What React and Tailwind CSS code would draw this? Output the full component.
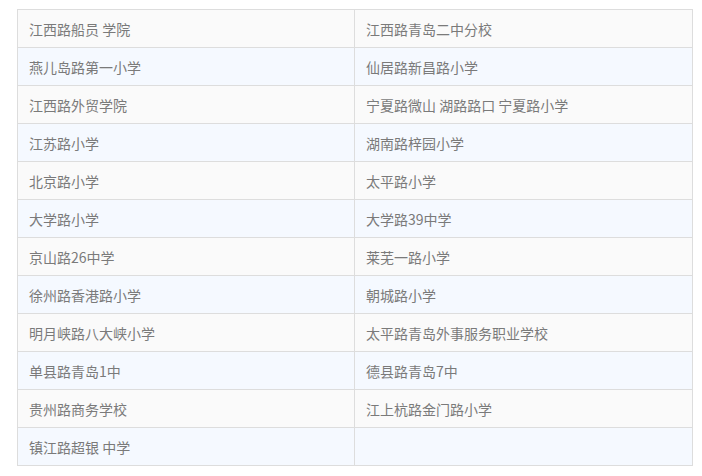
import React from "react";

const rows = [
  ["江西路船员 学院", "江西路青岛二中分校"],
  ["燕儿岛路第一小学", "仙居路新昌路小学"],
  ["江西路外贸学院", "宁夏路微山 湖路路口 宁夏路小学"],
  ["江苏路小学", "湖南路梓园小学"],
  ["北京路小学", "太平路小学"],
  ["大学路小学", "大学路39中学"],
  ["京山路26中学", "莱芜一路小学"],
  ["徐州路香港路小学", "朝城路小学"],
  ["明月峡路八大峡小学", "太平路青岛外事服务职业学校"],
  ["单县路青岛1中", "德县路青岛7中"],
  ["贵州路商务学校", "江上杭路金门路小学"],
  ["镇江路超银 中学", ""],
];

function App() {
  return (
    <div
      className="w-[702px] h-[476px] bg-white pt-[9px] pl-[17px]"
      style={{ fontFamily: '"Noto Sans CJK SC", "Noto Sans", sans-serif' }}
    >
      <div className="grid grid-cols-[337px_338px] w-[676px] border-t border-l border-[#dddddd]">
        {rows.map((row, i) =>
          row.map((text, j) => (
            <div
              key={i + "-" + j}
              className={`h-[38px] flex items-center pl-[11px] pt-[1px] border-r border-b border-[#dddddd] text-[14px] text-[#7a7a7a] ${
                i % 2 === 0 ? "bg-[#fafafa]" : "bg-[#f5f9ff]"
              }`}
            >
              {text}
            </div>
          ))
        )}
      </div>
    </div>
  );
}

export default App;
